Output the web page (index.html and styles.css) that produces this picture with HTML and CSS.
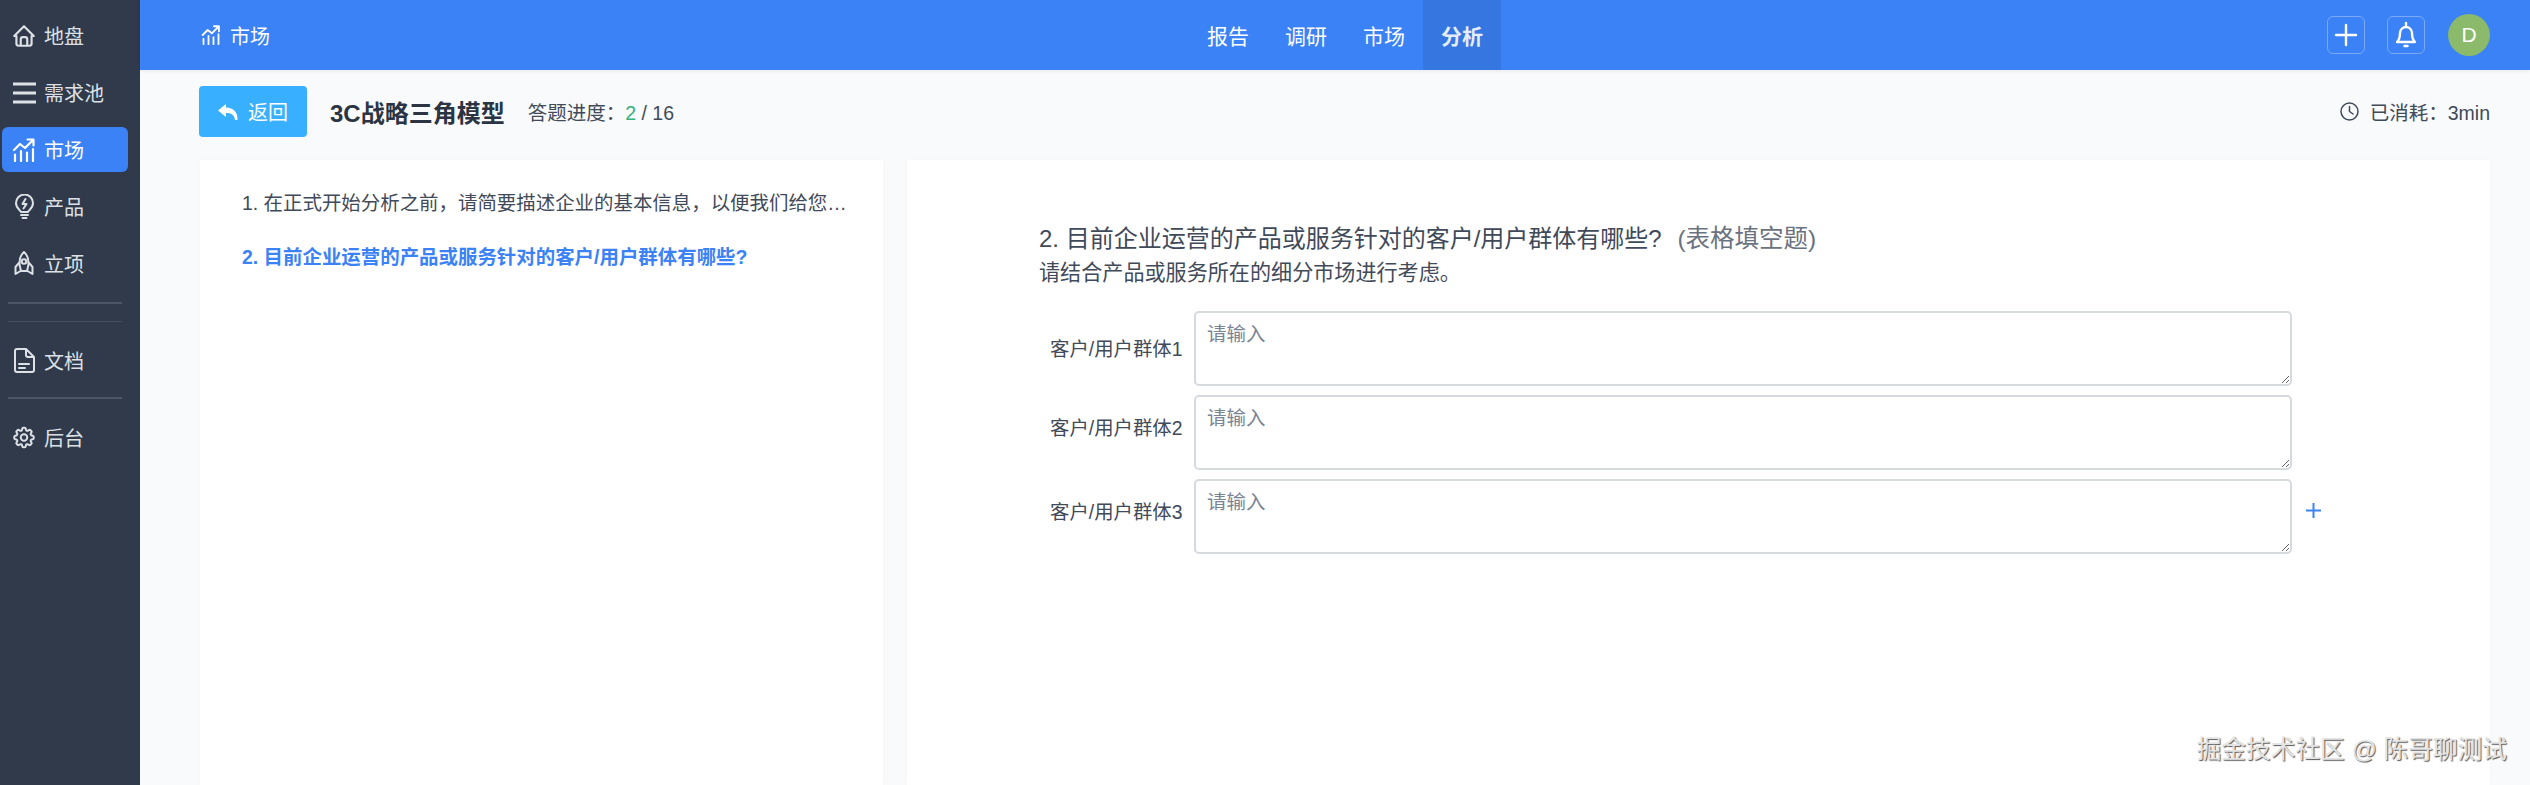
FILE: index.html
```html
<!DOCTYPE html>
<html lang="zh-CN">
<head>
    <meta charset="UTF-8">
    <title>3C战略三角模型</title>
    <link rel="stylesheet" href="styles.css">
</head>
<body>
    <svg class="icon-defs" width="0" height="0">
        <symbol id="iconMarket" viewBox="0 0 24 24">
            <path d="M2 12l6-6 5 4 8-8M15.500 1.500H21.500V7.500M3 16.500V23M9 13V23M15 14.500V23M21 11V23" fill="none" stroke="currentColor" stroke-width="2.200" stroke-linecap="round" stroke-linejoin="round"/>
        </symbol>
    </svg>

    <aside class="sidebar">
        <a class="side-item">
            <span class="side-icon">
                <svg width="26" height="26" viewBox="0 0 24 24" fill="none" stroke="currentColor" stroke-width="2" stroke-linecap="round" stroke-linejoin="round"><path d="M5 12H3l9-9 9 9h-2M5 12v7a2 2 0 0 0 2 2h10a2 2 0 0 0 2-2v-7M9 21v-6a2 2 0 0 1 2-2h2a2 2 0 0 1 2 2v6"/></svg>
            </span>
            地盘
        </a>
        <a class="side-item">
            <span class="side-icon">
                <svg width="23" height="22" viewBox="0 0 23 22" fill="none" stroke="currentColor" stroke-width="3"><path d="M0 2h23M0 11h23M0 20h23"/></svg>
            </span>
            需求池
        </a>
        <a class="side-item active">
            <span class="side-icon"><svg width="24" height="24"><use href="#iconMarket"/></svg></span>
            市场
        </a>
        <a class="side-item">
            <span class="side-icon">
                <svg width="19" height="25" viewBox="0 0 19 25" fill="none" stroke="currentColor" stroke-width="2" stroke-linecap="round" stroke-linejoin="round"><path d="M6 18c-.5-2-5-3.500-5-9a8.500 8.500 0 0 1 17 0c0 5.500-4.500 7-5 9zM6 21h7M7.500 24h4M10.500 5L7.500 10h4l-3 4.500"/></svg>
            </span>
            产品
        </a>
        <a class="side-item">
            <span class="side-icon">
                <svg width="20" height="25" viewBox="0 0 20 25" fill="none" stroke="currentColor" stroke-width="2" stroke-linecap="round" stroke-linejoin="round"><path d="M10 1C6.500 4 5.500 8 5.500 12c0 3 1 6 1.500 8h6c.5-2 1.500-5 1.500-8 0-4-1-8-4.500-11zM5.800 11L1.500 16v7l5-3M14.200 11l4.300 5v7l-5-3"/><circle cx="10" cy="10.500" r="2.300"/></svg>
            </span>
            立项
        </a>
        <div class="side-line thick"></div>
        <div class="side-line"></div>
        <a class="side-item doc">
            <span class="side-icon">
                <svg width="21" height="25" viewBox="0 0 21 25" fill="none" stroke="currentColor" stroke-width="2" stroke-linecap="round" stroke-linejoin="round"><path d="M3 1h9l8 8v13a2 2 0 0 1-2 2H3a2 2 0 0 1-2-2V3a2 2 0 0 1 2-2zM12 1v6a2 2 0 0 0 2 2h6M5 16h10M5 20h6"/></svg>
            </span>
            文档
        </a>
        <div class="side-line thick after-doc"></div>
        <a class="side-item admin">
            <span class="side-icon">
                <svg width="27" height="27" viewBox="0 0 24 24" fill="none" stroke="currentColor" stroke-width="1.800" stroke-linecap="round" stroke-linejoin="round"><path d="M10.343 3.940c.09-.542.56-.94 1.110-.94h1.093c.55 0 1.020.398 1.110.94l.149.894c.07.424.384.764.78.93.398.164.855.142 1.205-.108l.737-.527a1.125 1.125 0 0 1 1.450.12l.773.774c.39.389.44 1.002.12 1.450l-.527.737c-.25.35-.272.806-.107 1.204.165.397.505.71.93.78l.893.15c.543.09.94.56.94 1.109v1.094c0 .55-.397 1.020-.94 1.110l-.893.149c-.425.07-.765.383-.93.78-.165.398-.143.854.107 1.204l.527.738c.32.447.269 1.060-.12 1.450l-.774.773a1.125 1.125 0 0 1-1.449.12l-.738-.527c-.35-.25-.806-.272-1.203-.107-.397.165-.71.505-.781.929l-.149.894c-.09.542-.56.94-1.110.94h-1.094c-.55 0-1.019-.398-1.110-.94l-.148-.894c-.071-.424-.384-.764-.781-.93-.398-.164-.854-.142-1.204.108l-.738.527c-.447.32-1.060.269-1.450-.12l-.773-.774a1.125 1.125 0 0 1-.12-1.450l.527-.737c.25-.35.273-.806.108-1.204-.165-.397-.505-.71-.93-.78l-.894-.15c-.542-.09-.94-.56-.94-1.109v-1.094c0-.55.398-1.020.94-1.110l.894-.149c.424-.07.765-.383.93-.78.165-.398.143-.854-.107-1.204l-.527-.738a1.125 1.125 0 0 1 .12-1.450l.773-.773a1.125 1.125 0 0 1 1.450-.12l.737.527c.35.25.807.272 1.204.107.397-.165.71-.505.78-.929l.15-.894z"/><circle cx="12" cy="12" r="3"/></svg>
            </span>
            后台
        </a>
    </aside>

    <div class="main">
        <header class="topbar">
            <div class="crumb">
                <svg width="20" height="20"><use href="#iconMarket"/></svg>
                市场
            </div>
            <nav class="topnav">
                <a class="topnav-item">报告</a>
                <a class="topnav-item">调研</a>
                <a class="topnav-item">市场</a>
                <a class="topnav-item active">分析</a>
            </nav>
            <div class="top-actions">
                <div class="top-btn">
                    <svg width="24" height="24" viewBox="0 0 24 24" fill="none" stroke="currentColor" stroke-width="2.400" stroke-linecap="round"><path d="M12 2v20M2 12h20"/></svg>
                </div>
                <div class="top-btn">
                    <svg width="22" height="28" viewBox="0 0 22 28" fill="none" stroke="currentColor" stroke-width="2.400" stroke-linecap="round" stroke-linejoin="round"><path d="M11 2v2M5 12a6 6 0 0 1 12 0c0 5 1 7 3 9H2c2-2 3-4 3-9zM9.500 25h3"/></svg>
                </div>
                <div class="avatar">D</div>
            </div>
        </header>

        <div class="subbar">
            <button class="back-btn">
                <svg width="20" height="18" viewBox="0 0 20 18" fill="currentColor"><path d="M8 1L0 7.500 8 14v-4c5 0 8 1.500 9 7h2.500c.5-8-4-12-11.500-12.500z"/></svg>
                返回
            </button>
            <div class="survey-title">3C战略三角模型</div>
            <div class="progress">答题进度：<span class="progress-now">2</span> / 16</div>
            <div class="elapsed">
                <svg width="19" height="19" viewBox="0 0 19 19" fill="none" stroke="currentColor" stroke-width="1.500" stroke-linecap="round" stroke-linejoin="round"><circle cx="9.500" cy="9.500" r="8.500"/><path d="M9.500 4.500v5l3.500 2.500"/></svg>
                已消耗：3min
            </div>
        </div>

        <div class="content">
            <div class="card question-list">
                <div class="question-item">1. 在正式开始分析之前，请简要描述企业的基本信息，以便我们给您…</div>
                <div class="question-item current">2. 目前企业运营的产品或服务针对的客户/用户群体有哪些?</div>
            </div>
            <div class="card question-panel">
                <div class="question-title">2. 目前企业运营的产品或服务针对的客户/用户群体有哪些? <span class="question-type">(表格填空题)</span></div>
                <div class="question-hint">请结合产品或服务所在的细分市场进行考虑。</div>
                <div class="answer-row">
                    <label class="answer-label first">客户/用户群体1</label>
                    <textarea class="answer-input" placeholder="请输入"></textarea>
                </div>
                <div class="answer-row">
                    <label class="answer-label">客户/用户群体2</label>
                    <textarea class="answer-input" placeholder="请输入"></textarea>
                </div>
                <div class="answer-row">
                    <label class="answer-label">客户/用户群体3</label>
                    <textarea class="answer-input" placeholder="请输入"></textarea>
                    <svg class="add-row" width="15" height="15" viewBox="0 0 15 15" fill="none" stroke="currentColor" stroke-width="2"><path d="M7.500 0v15M0 7.500h15"/></svg>
                </div>
            </div>
        </div>
    </div>

    <div class="watermark">掘金技术社区 @ 陈哥聊测试</div>
</body>
</html>
```

FILE: styles.css
```css
* {
    box-sizing: border-box;
}

html,
body {
    height: 100%;
}

body {
    margin: 0;
    display: flex;
    overflow: hidden;
    font-family: "Liberation Sans", "Noto Sans CJK SC", sans-serif;
    color: #414a59;
    background-color: #f9fafb;
}

.icon-defs {
    position: absolute;
}

.sidebar {
    flex: none;
    display: flex;
    flex-direction: column;
    width: 140px;
    padding-top: 13px;
    background-color: #303a4b;
}

.side-item {
    display: flex;
    align-items: center;
    gap: 7px;
    width: 126px;
    height: 45px;
    margin: 0 0 12px 2px;
    padding-left: 9px;
    border-radius: 6px;
    font-size: 20px;
    color: #dde1e6;
}

.side-item.active {
    background-color: #3b82f6;
    color: #fff;
}

.side-item.doc {
    margin-top: 16px;
    margin-bottom: 0;
}

.side-item.admin {
    margin-top: 16px;
}

.side-icon {
    display: flex;
    align-items: center;
    justify-content: center;
    width: 26px;
}

.side-line {
    height: 1px;
    margin: 0 18px 0 8px;
    background-color: #434d5e;
}

.side-line.thick {
    height: 2px;
    margin-top: 4px;
    margin-bottom: 17px;
    background-color: #4b5563;
}

.side-line.after-doc {
    margin-top: 14px;
    margin-bottom: 0;
}

.main {
    flex: 1;
    display: flex;
    flex-direction: column;
    min-width: 0;
}

.topbar {
    flex: none;
    display: flex;
    align-items: center;
    height: 70px;
    padding: 0 40px 0 61px;
    background-color: #3b82f6;
    color: #fff;
    box-shadow: 0 1px 4px rgba(0, 0, 0, 0.08);
}

.crumb {
    display: flex;
    align-items: center;
    gap: 9px;
    width: 988px;
    font-size: 20px;
}

.topnav {
    display: flex;
    height: 100%;
}

.topnav-item {
    display: flex;
    align-items: center;
    width: 78px;
    padding-left: 18px;
    font-size: 21px;
}

.topnav-item.active {
    font-weight: bold;
    color: #e5edfb;
    background-color: #3576e0;
}

.top-actions {
    display: flex;
    align-items: center;
    margin-left: auto;
}

.top-btn {
    display: flex;
    align-items: center;
    justify-content: center;
    width: 38px;
    height: 38px;
    margin-right: 22px;
    border: 1px solid #7aaaf8;
    border-radius: 6px;
}

.avatar {
    display: flex;
    align-items: center;
    justify-content: center;
    width: 42px;
    height: 42px;
    margin-left: 1px;
    border-radius: 50%;
    background-color: #8bba6b;
    font-size: 21px;
}

.subbar {
    flex: none;
    display: flex;
    align-items: center;
    height: 90px;
    padding: 0 40px 7px 59px;
}

.back-btn {
    display: flex;
    align-items: center;
    justify-content: center;
    gap: 10px;
    width: 108px;
    height: 51px;
    padding: 0;
    border: none;
    border-radius: 4px;
    background-color: #38b0ff;
    color: #fff;
    font-family: inherit;
    font-size: 20px;
}

.survey-title {
    margin-left: 23px;
    font-size: 24px;
    font-weight: bold;
    color: #2b3442;
}

.progress {
    margin-left: 23px;
    font-size: 19.500px;
}

.progress-now {
    color: #34b27b;
}

.elapsed {
    display: flex;
    align-items: center;
    gap: 11px;
    margin-left: auto;
    font-size: 19.500px;
}

.content {
    flex: 1;
    display: flex;
    gap: 24px;
    padding: 0 40px 0 60px;
}

.card {
    background-color: #fff;
    box-shadow: 0 0 6px rgba(0, 0, 0, 0.02);
}

.question-list {
    flex: none;
    width: 683px;
    padding: 28px 20px 0 42px;
}

.question-item {
    height: 30px;
    margin-bottom: 24px;
    white-space: nowrap;
    font-size: 19.450px;
    line-height: 30px;
}

.question-item.current {
    font-weight: bold;
    color: #3b82f6;
}

.question-panel {
    flex: 1;
    padding: 61px 0 0 132px;
}

.question-title {
    font-size: 24px;
    line-height: 35px;
}

.question-type {
    margin-left: 9px;
    font-size: 24.500px;
    color: #6b7280;
}

.question-hint {
    margin-bottom: 21px;
    font-size: 21.100px;
    line-height: 34px;
}

.answer-row {
    display: flex;
    align-items: center;
    margin-bottom: 9px;
}

.answer-label {
    width: 155px;
    padding: 0 0 13px 11px;
    font-size: 19.400px;
    white-space: nowrap;
}

.answer-label.first {
    padding-bottom: 2px;
}

.answer-input {
    flex: none;
    width: 1098px;
    height: 75px;
    padding: 8px 11px;
    border: 2px solid #d6d9de;
    border-radius: 5px;
    font-family: inherit;
    font-size: 19.500px;
    line-height: 26px;
    color: #414a59;
    background-color: #fff;
}

.answer-input::placeholder {
    color: #7b8494;
}

.add-row {
    margin: 0 0 12px 14px;
    color: #3b82f6;
}

.watermark {
    position: absolute;
    right: 23px;
    bottom: 20px;
    font-size: 24.700px;
    white-space: nowrap;
    color: #e4e4e4;
    text-shadow: 1px 1px 1px #555;
}
```
